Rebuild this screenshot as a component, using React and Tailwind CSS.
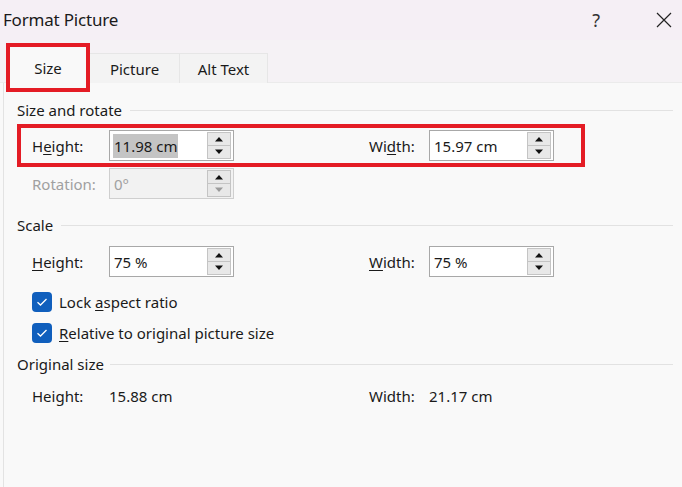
import React from 'react'

const font = { fontFamily: '"Noto Sans", "Liberation Sans", sans-serif' }

// label with one underlined access key
const Label = ({ text, u, disabled }) => {
    const i = u === undefined ? -1 : u
    return (
        <span className={disabled ? 'text-[#a0a0a0]' : 'text-[#1a1a1a]'}>
            {i < 0 ? text : (
                <>
                    {text.slice(0, i)}
                    <span className="underline underline-offset-2">{text[i]}</span>
                    {text.slice(i + 1)}
                </>
            )}
        </span>
    )
}

const Arrow = ({ up, color }) => (
    <svg width="10" height="6" viewBox="0 0 10 6">
        {up
            ? <path d="M1 5.5 L5 1 L9 5.5 Z" fill={color} />
            : <path d="M1 0.5 L5 5 L9 0.5 Z" fill={color} />}
    </svg>
)

const Spin = ({ value, selected, disabled }) => (
    <div className={`flex items-center w-[125px] h-[31px] border ${disabled ? 'border-[#cfcfcf] bg-[#f2f2f2]' : 'border-[#a8a8a8] bg-white'}`}>
        <div className="flex-1 pl-[3px]">
            <span className={`px-[1px] py-[2px] ${selected ? 'bg-[#c4c4c4]' : ''} ${disabled ? 'text-[#a0a0a0]' : 'text-[#1a1a1a]'}`}>
                {value}
            </span>
        </div>
        <div className="flex flex-col w-[24px] h-[27px] mr-[2px] border border-[#c4c4c4]">
            <div className="flex-1 flex items-center justify-center bg-[#e8e8e8] border-b border-[#c4c4c4]">
                <Arrow up color="#111" />
            </div>
            <div className="flex-1 flex items-center justify-center bg-[#e8e8e8]">
                <Arrow color={disabled ? '#9a9a9a' : '#111'} />
            </div>
        </div>
    </div>
)

const Row = ({ h, w, selected }) => (
    <div className="flex items-center">
        <div className="w-[77px]"><Label {...h.label} /></div>
        <Spin value={h.value} selected={selected} />
        <div className="w-[60px] ml-[135px]"><Label {...w.label} /></div>
        <Spin value={w.value} />
    </div>
)

const Section = ({ title, line }) => (
    <div className="flex items-center pl-[13px] pr-[9px] h-[20px]">
        <span className="text-[#1a1a1a]">{title}</span>
        <div className={`flex-1 h-px bg-[#e2e2e2] ${line}`}></div>
    </div>
)

const Check = ({ children }) => (
    <div className="flex items-center gap-[7px] pl-[28px]">
        <div className="w-[20px] h-[20px] rounded-[4px] bg-[#105fbd] flex items-center justify-center">
            <svg width="12" height="10" viewBox="0 0 12 10">
                <path d="M1.5 5.2 L4.5 8 L10.5 2" stroke="white" strokeWidth="1.3" fill="none" />
            </svg>
        </div>
        <span className="text-[#1a1a1a]">{children}</span>
    </div>
)

const App = () => {
    return (
        <div style={font} className="w-[682px] h-[487px] bg-[#f9f9f9] overflow-hidden text-[15px] leading-[20px]">
            {/* title bar */}
            <div className="h-[40px] bg-[#f5eff5] flex items-center pl-[3px] pr-[10px]">
                <span className="text-[17px] text-[#1a1a1a] tracking-[-0.2px]">Format Picture</span>
                <span className="ml-auto text-[18px] text-[#333] mr-[56px]">?</span>
                <svg width="16" height="16" viewBox="0 0 16 16">
                    <path d="M1 1 L15 15 M15 1 L1 15" stroke="#222" strokeWidth="1.2" />
                </svg>
            </div>

            {/* tabs */}
            <div className="h-[43px] flex items-start pl-[6px] bg-[#f5f2f5] border-b border-[#ebebeb]">
                <div className="mt-[3px] w-[84px] h-[49px] border-4 border-[#e41c25] bg-[#f9f9f9] relative z-10 flex items-center justify-center text-[#1a1a1a]">
                    Size
                </div>
                <div className="mt-[13px] w-[90px] h-[30px] border-r border-t border-[#e6e6e6] bg-[#f3f3f3] flex items-center justify-center text-[#1a1a1a]">
                    Picture
                </div>
                <div className="mt-[13px] w-[88px] h-[30px] border-r border-t border-[#e6e6e6] bg-[#f3f3f3] flex items-center justify-center text-[#1a1a1a]">
                    Alt Text
                </div>
            </div>

            {/* content */}
            <div className="ml-[3px] border-l border-[#e3e3e3] h-[404px] pt-[17px]">
                <Section title="Size and rotate" line="ml-[8px]" />

                <div className="mt-[4px] ml-[13px] w-[568px] h-[43px] border-4 border-[#e41c25] pl-[11px] flex items-center">
                    <Row
                        selected
                        h={{ label: { text: 'Height:', u: 1 }, value: '11.98 cm' }}
                        w={{ label: { text: 'Width:', u: 2 }, value: '15.97 cm' }}
                    />
                </div>

                <div className="mt-[1px] pl-[28px] flex items-center">
                    <div className="w-[77px]"><Label text="Rotation:" disabled /></div>
                    <Spin value="0°" disabled />
                </div>

                <div className="mt-[16px]">
                    <Section title="Scale" line="ml-[8px]" />
                </div>

                <div className="mt-[11px] pl-[28px]">
                    <Row
                        h={{ label: { text: 'Height:', u: 0 }, value: '75 %' }}
                        w={{ label: { text: 'Width:', u: 0 }, value: '75 %' }}
                    />
                </div>

                <div className="mt-[15px]">
                    <Check><Label text="Lock aspect ratio" u={5} /></Check>
                </div>
                <div className="mt-[11px]">
                    <Check><Label text="Relative to original picture size" u={0} /></Check>
                </div>

                <div className="mt-[11px]">
                    <Section title="Original size" line="ml-[6px]" />
                </div>

                <div className="mt-[12px] pl-[28px] flex items-center text-[#1a1a1a]">
                    <span className="w-[77px]">Height:</span>
                    <span className="w-[260px]">15.88 cm</span>
                    <span className="w-[60px]">Width:</span>
                    <span>21.17 cm</span>
                </div>
            </div>
        </div>
    )
}

export default App
